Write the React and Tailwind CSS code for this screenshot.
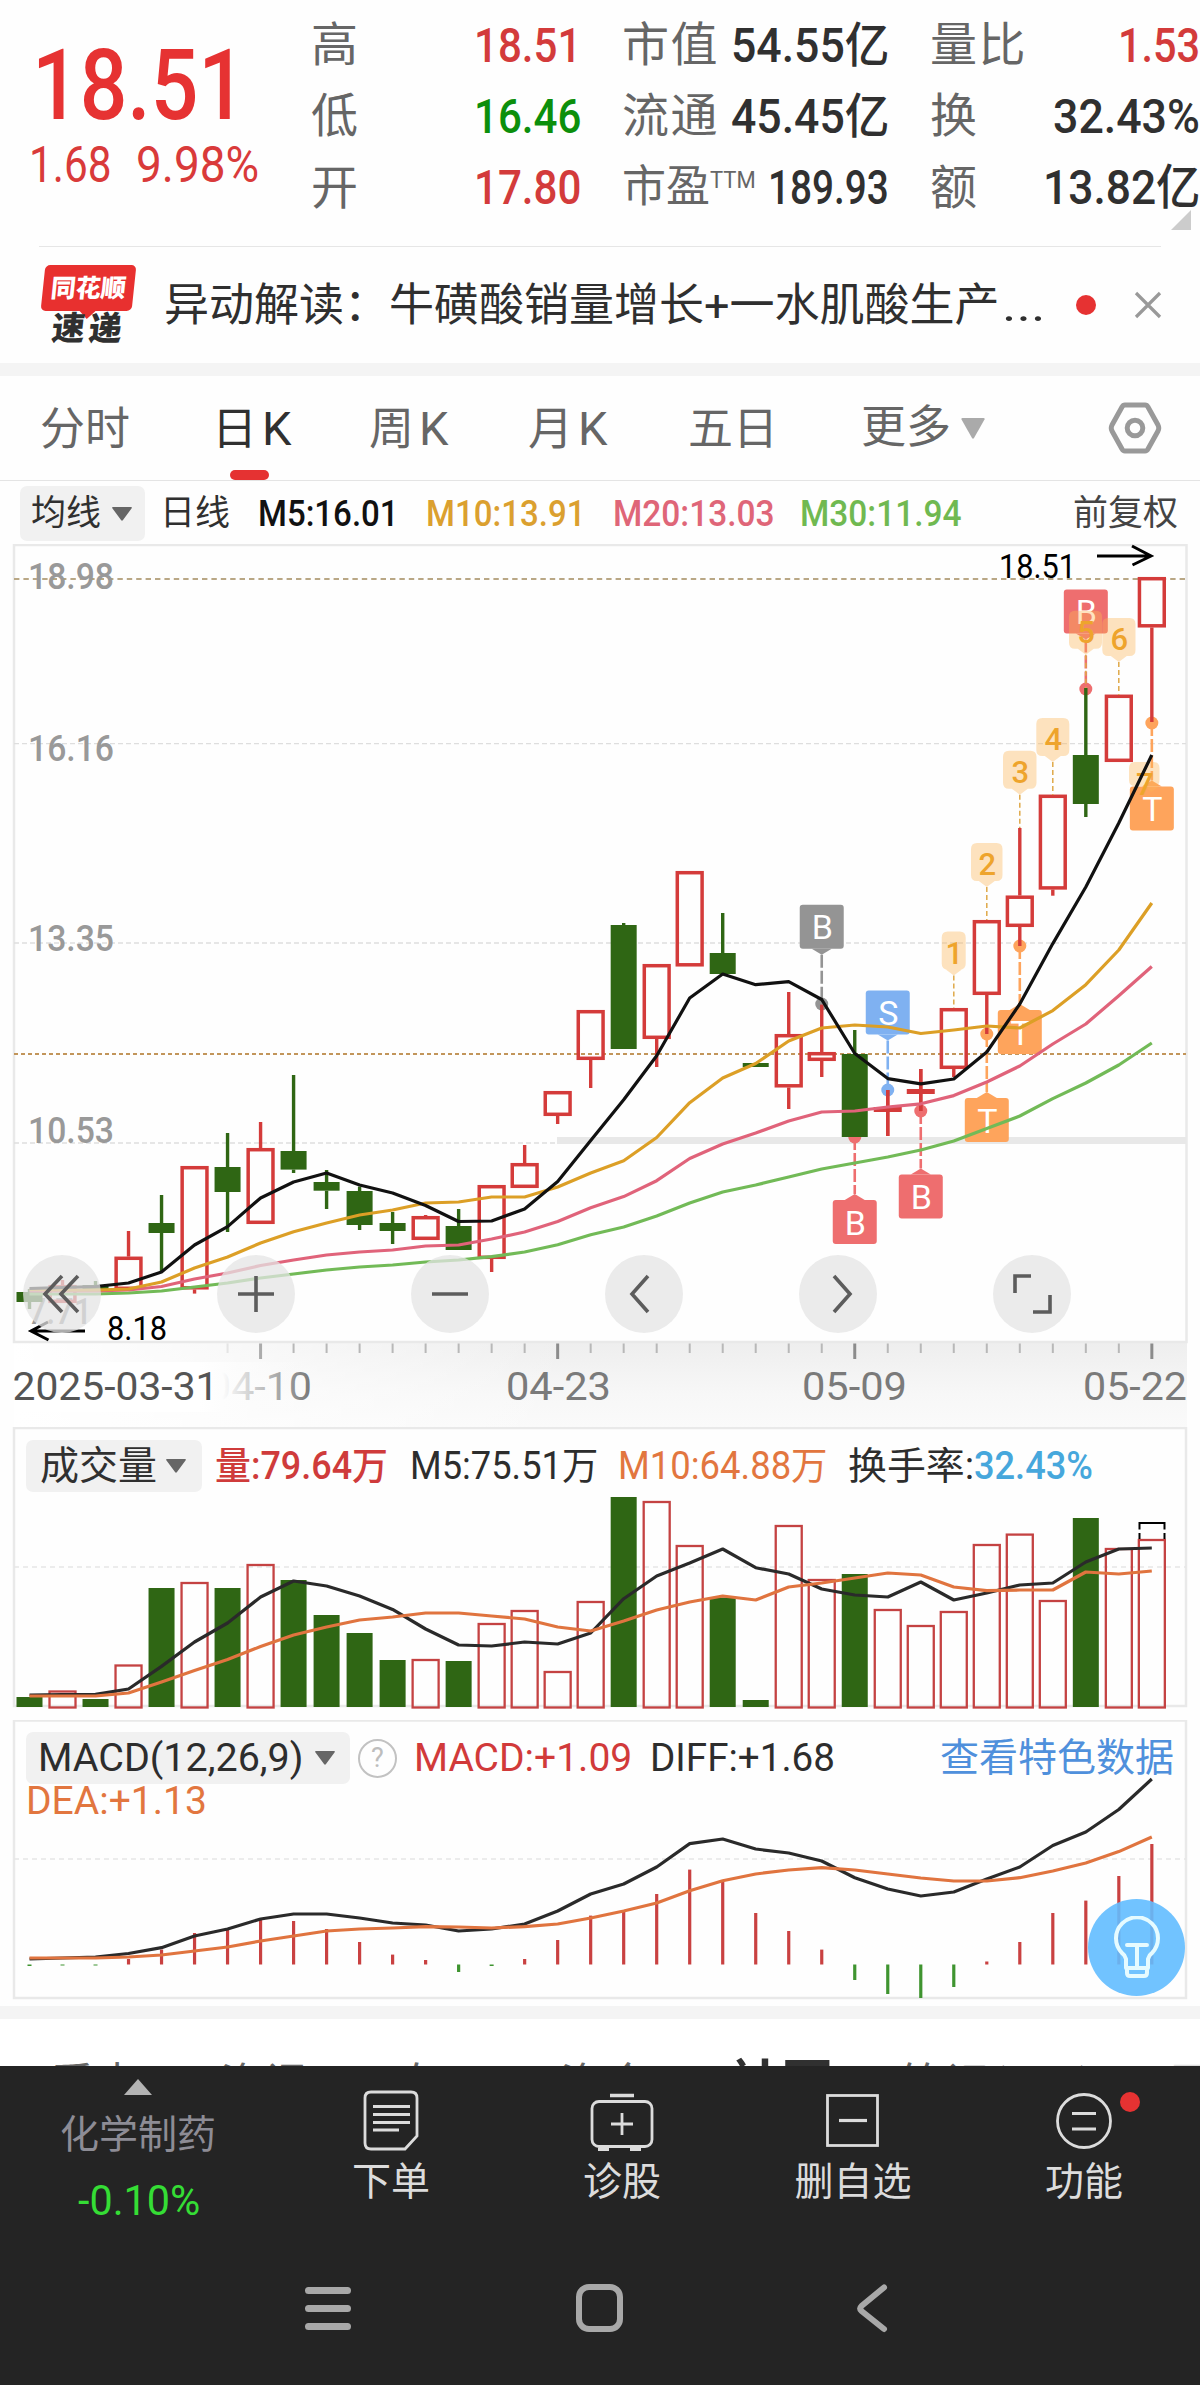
import React, { useLayoutEffect, useRef, useState } from "react";

const FONT = "font-[Roboto,'Noto_Sans_CJK_SC',sans-serif]";

// Keeps a piece of text at a fixed width by condensing it horizontally.
function Fit({ w, className = "", children }) {
  const ref = useRef(null);
  const [scale, setScale] = useState(1);
  useLayoutEffect(() => {
    const measure = () => ref.current && setScale(w / ref.current.offsetWidth);
    measure();
    document.fonts?.ready.then(measure);
  }, [w]);
  return (
    <span className={`inline-block shrink-0 whitespace-nowrap ${className}`} style={{ width: w }}>
      <span ref={ref} className="inline-block origin-left" style={{ transform: `scaleX(${scale})` }}>
        {children}
      </span>
    </span>
  );
}

const X = (i) => 29.5 + 33.01 * i;

// [kind, high, bodyTop, bodyBottom, low]
const CANDLES = [
  ["g", 1289, 1292, 1302, 1309], ["r", 1280, 1285, 1303, 1303], ["g", 1281, 1285, 1289, 1289],
  ["r", 1231, 1256.6, 1290, 1290], ["g", 1195, 1223, 1233, 1271], ["r", 1166, 1166, 1289.5, 1293.6],
  ["g", 1133, 1167, 1192, 1232], ["r", 1122, 1148, 1224, 1224], ["g", 1075, 1151, 1169.6, 1173],
  ["g", 1170, 1182, 1190.7, 1209], ["g", 1186.6, 1191, 1225, 1230], ["g", 1212, 1223, 1231, 1244],
  ["r", 1215, 1216, 1240, 1240], ["g", 1209, 1226, 1250, 1250], ["r", 1185, 1185, 1259, 1272],
  ["r", 1145, 1163, 1188, 1188], ["r", 1091, 1091, 1116, 1124], ["r", 1010, 1010, 1060, 1088],
  ["g", 923, 925, 1049, 1049], ["r", 964, 964, 1039, 1067], ["r", 871, 871, 966.5, 966.5],
  ["g", 913, 953, 974, 974], ["g", 1063, 1063, 1067, 1067], ["r", 992, 1034, 1087.5, 1109],
  ["r", 1004.6, 1052, 1061, 1077], ["g", 1030, 1054, 1137, 1137], ["r", 1090, 1107, 1112, 1136],
  ["r", 1069, 1089, 1094, 1111], ["r", 1008, 1008, 1069, 1077], ["r", 920, 920, 995, 1034],
  ["r", 828, 895.5, 927, 946], ["r", 794.6, 794.6, 889.6, 895.7], ["g", 688, 755, 804, 817],
  ["r", 694.6, 694.6, 762, 762], ["r", 577, 577, 627.5, 722],
];
const MA5 = [1288.5, 1287.5, 1286.5, 1283, 1272, 1245, 1226.6, 1198, 1182, 1173, 1185, 1193, 1205.5, 1221.5, 1221, 1209, 1181.5, 1140.4, 1099.7, 1055.7, 998, 974, 984.7, 981.7, 999.5, 1053.5, 1078.6, 1083.8, 1079, 1052, 1004, 943.6, 887, 823, 755];
const MA10 = [1289.5, 1290, 1290, 1289, 1282, 1268, 1257, 1243, 1231.8, 1223, 1215, 1210, 1203, 1202, 1197, 1197, 1187, 1173, 1160.8, 1137.5, 1102.7, 1078, 1063.5, 1041, 1028, 1025, 1027, 1033.5, 1030, 1026, 1028, 1010.6, 984.7, 950, 903];
const MA20 = [1291, 1291, 1291, 1290, 1286.5, 1279, 1273, 1265.5, 1260, 1255, 1252, 1250, 1246, 1245, 1239, 1232, 1221.5, 1207.7, 1196.6, 1180.7, 1158.5, 1144, 1133, 1121, 1112, 1111, 1107, 1103.8, 1095.6, 1082, 1066, 1044, 1024, 995.7, 966.5];
const MA30 = [1294, 1294, 1294, 1293, 1291, 1287, 1283, 1278, 1274, 1270, 1267, 1265, 1262, 1260, 1256.6, 1252, 1244.7, 1234.7, 1227, 1216, 1203, 1192, 1185, 1177, 1169, 1163, 1157, 1150, 1141, 1128.6, 1116, 1098.6, 1083, 1065, 1043];

const VOL = [1697, 1690.5, 1699, 1664.5, 1588, 1582, 1588, 1564, 1580, 1615, 1633, 1660, 1659, 1661, 1623, 1610, 1671, 1601, 1497, 1501, 1545, 1597.5, 1700, 1525, 1579, 1574, 1609, 1625, 1611, 1544, 1533.6, 1600, 1518, 1548, 1539];
const VMA5 = [1695, 1694.5, 1694.4, 1689, 1666.4, 1642, 1623, 1597, 1581, 1586, 1596, 1609.4, 1629, 1645, 1646, 1642, 1644, 1633, 1598.7, 1576, 1563, 1549, 1567.7, 1574, 1589, 1595, 1597, 1582, 1600, 1593, 1585, 1583, 1562, 1549, 1548];
const VMA10 = [1696, 1696, 1696, 1693, 1682, 1670.6, 1659.5, 1646.5, 1635, 1627, 1620, 1617, 1613, 1613, 1616, 1619, 1627, 1631, 1621, 1610, 1602, 1596, 1600, 1587, 1583, 1578, 1573, 1575, 1587, 1590.6, 1590, 1590, 1572, 1574, 1571];

const MACD = [1966, 1965.5, 1965.5, 1959, 1949.6, 1933, 1929, 1920, 1921, 1929, 1942, 1954.6, 1960, 1972, 1966, 1959, 1940, 1915.6, 1912, 1894, 1869.6, 1882, 1913, 1931, 1949.6, 1980, 1994, 1998, 1987, 1961.5, 1942, 1913, 1900.6, 1876, 1844];
const DIFF = [1959, 1958, 1957, 1953.5, 1947.7, 1936, 1929, 1919, 1914, 1914, 1918, 1923, 1925, 1931, 1929, 1924, 1911, 1894, 1884, 1867, 1843.6, 1839, 1849, 1853, 1861, 1877.7, 1889, 1896, 1892, 1879, 1867, 1845.5, 1832, 1809.5, 1779];
const DEA = [1958, 1958, 1958, 1957, 1955, 1951, 1947, 1941, 1936, 1931, 1929, 1928, 1926.6, 1927, 1928, 1926.6, 1924, 1918, 1911, 1903, 1890.7, 1880.7, 1874, 1870, 1867.7, 1870, 1874, 1878, 1881, 1881, 1877.7, 1871, 1863, 1851.6, 1837];

const GREEN = "#2f6614";
const RED = "#d43b3a";

function Line({ data, color, w = 3.2 }) {
  return (
    <polyline
      points={data.map((y, i) => `${X(i).toFixed(1)},${y}`).join(" ")}
      fill="none" stroke={color} strokeWidth={w} strokeLinejoin="round"
    />
  );
}

function Candle({ i, c }) {
  const [kind, hi, top, bot, lo] = c;
  const x = X(i);
  const color = kind === "g" ? GREEN : RED;
  return (
    <g>
      {hi < top && <line x1={x} x2={x} y1={hi} y2={top} stroke={color} strokeWidth="3.4" />}
      {lo > bot && <line x1={x} x2={x} y1={bot} y2={lo} stroke={color} strokeWidth="3.4" />}
      {kind === "g" ? (
        <rect x={x - 13} y={top} width="26" height={bot - top} fill={color} />
      ) : bot - top < 6 ? (
        <g>
          <rect x={x - 14} y={top} width="28" height={bot - top} fill={color} />
          <line x1={x} x2={x} y1={hi} y2={lo} stroke={color} strokeWidth="3.4" />
        </g>
      ) : (
        <rect x={x - 12.4} y={top + 1.7} width="24.8" height={bot - top - 3.4} fill="none" stroke={color} strokeWidth="3.5" />
      )}
    </g>
  );
}

// A lettered trade marker; `up` puts the pointer on the upper edge.
function Marker({ i, top, dot, letter, color, up }) {
  const x = X(i);
  const b = top + 44;
  return (
    <g>
      <line x1={x} x2={x} y1={up ? dot : b + 6} y2={up ? top - 6 : dot} stroke={color} strokeWidth="2.6" strokeDasharray="13 3" />
      <circle cx={x} cy={dot} r="6.5" fill={color} />
      <path d={up ? `M${x - 10} ${top}L${x} ${top - 6}L${x + 10} ${top}Z` : `M${x - 10} ${b}L${x} ${b + 6}L${x + 10} ${b}Z`} fill={color} />
      <rect x={x - 22} y={top} width="44" height="44" rx="3" fill={color} />
      <text x={x + 0.5} y={top + 34.5} fontSize="34" textAnchor="middle" fill="#fff">{letter}</text>
    </g>
  );
}

function CountTag({ n, x, x0, x1, top, h = 38, to, dy = 32 }) {
  return (
    <g>
      <g fill="#fdb658" fillOpacity="0.38">
        <path d={`M${x0 + 6} ${top}H${x1 - 6}Q${x1} ${top} ${x1} ${top + 6}V${top + h - 6}Q${x1} ${top + h} ${x1 - 6} ${top + h}H${x + 8}L${x} ${top + h + 6}L${x - 8} ${top + h}H${x0 + 6}Q${x0} ${top + h} ${x0} ${top + h - 6}V${top + 6}Q${x0} ${top} ${x0 + 6} ${top}Z`} />
      </g>
      {to && <line x1={x} x2={x} y1={top + h + 6} y2={to} stroke="#dfa94a" strokeWidth="1.5" strokeDasharray="5 3" />}
      <text x={(x0 + x1) / 2 + 0.5} y={top + dy} fontSize="31" fontWeight="500" textAnchor="middle" fill="#eea42c">{n}</text>
    </g>
  );
}

function AxisText({ x, y, w, size = 37, fill = "#999", weight = 500, children }) {
  return (
    <text x={x} y={y} fontSize={size} fontWeight={weight} fill={fill} textLength={w} lengthAdjust="spacingAndGlyphs">{children}</text>
  );
}

function KChart() {
  const ticks = [];
  for (let i = 6; i < 35; i++) ticks.push(i);
  return (
    <svg className="block" width="1200" height="883" viewBox="0 544 1200 883">
      <defs>
        <linearGradient id="axis" x1="0" y1="0" x2="0" y2="1">
          <stop offset="0" stopColor="#eeeeee" /><stop offset="0.6" stopColor="#f7f7f7" /><stop offset="1" stopColor="#fafafa" />
        </linearGradient>
        <linearGradient id="fade" x1="0" y1="0" x2="1" y2="0">
          <stop offset="0" stopColor="#fff" /><stop offset="1" stopColor="#fff" stopOpacity="0" />
        </linearGradient>
        <linearGradient id="cover" gradientUnits="userSpaceOnUse" x1="200" x2="310" y1="0" y2="0">
          <stop offset="0" stopColor="#fff" /><stop offset="0.2" stopColor="#fdfdfd" /><stop offset="1" stopColor="#fafafa" stopOpacity="0" />
        </linearGradient>
      </defs>
      <rect x="14" y="1343" width="1173" height="84" fill="url(#axis)" />
      <rect x="14" y="1343" width="560" height="84" fill="url(#fade)" />
      <rect x="14" y="545" width="1172.5" height="797" fill="none" stroke="#e9e9e9" strokeWidth="2.5" />
      {[743.6, 943, 1143].map((y) => (
        <line key={y} x1="14" x2="1186" y1={y} y2={y} stroke="#dedede" strokeWidth="1.3" strokeDasharray="5 3" />
      ))}
      <line x1="14" x2="1186" y1="579" y2="579" stroke="#b9a785" strokeWidth="2" strokeDasharray="5.4 4" />
      <rect x="557" y="1137" width="629" height="7" fill="#e8e8e8" />
      <line x1="14" x2="1186" y1="1054" y2="1054" stroke="#c2955a" strokeWidth="2" strokeDasharray="4 3" />
      <AxisText x={28} y={589} w={86}>18.98</AxisText>
      <AxisText x={28} y={761} w={86}>16.16</AxisText>
      <AxisText x={28} y={951} w={86}>13.35</AxisText>
      <AxisText x={28} y={1143} w={86}>10.53</AxisText>
      <AxisText x={28} y={1323.5} w={64}>7.71</AxisText>
      {ticks.map((i) => {
        const big = i % 9 === 7;
        return <line key={i} x1={X(i)} x2={X(i)} y1="1343.5" y2={big ? 1359 : 1353} stroke={big ? "#8c8c8c" : "#b8b8b8"} strokeWidth={big ? 3 : 2} opacity={i === 6 ? 0.3 : i === 7 ? 0.7 : 1} />;
      })}
      <AxisText x={208} y={1400} w={104} size={38} weight={400} fill="#7a7a7a">04-10</AxisText>
      <AxisText x={506} y={1400} w={105} size={38} weight={400} fill="#7a7a7a">04-23</AxisText>
      <AxisText x={802} y={1400} w={105} size={38} weight={400} fill="#7a7a7a">05-09</AxisText>
      <AxisText x={1083} y={1400} w={104} size={38} weight={400} fill="#7a7a7a">05-22</AxisText>
      <rect x="14" y="1362" width="296" height="50" fill="url(#cover)" />
      <AxisText x={12.5} y={1400} w={206} size={38} weight={400} fill="#555">2025-03-31</AxisText>

      <Marker i={24} top={904.7} dot={1004} letter="B" color="#949494" />
      <Marker i={26} top={990.6} dot={1090} letter="S" color="#7fb1f1" />
      <Marker i={25} top={1200} dot={1137} letter="B" color="#ee6e6f" up />
      <Marker i={27} top={1174.5} dot={1111} letter="B" color="#ee6e6f" up />
      <Marker i={29} top={1098} dot={1034} letter="T" color="#fea45c" up />
      <Marker i={30} top={1010} dot={946} letter="T" color="#fea45c" up />
      <Marker i={32} top={589.6} dot={689} letter="B" color="#ee6e6f" />
      <Marker i={34} top={786.4} dot={723} letter="T" color="#fea45c" up />
      <CountTag n="7" x={1151.5} x0={1129} x1={1159.5} top={762} h={24} dy={33} />
      {CANDLES.map((c, i) => <Candle key={i} i={i} c={c} />)}
      <CountTag n="1" x={953.8} x0={941.7} x1={965.7} top={931.5} to={1008} />
      <CountTag n="2" x={986.8} x0={971} x1={1002.5} top={843} to={920} />
      <CountTag n="3" x={1019.8} x0={1003} x1={1036.5} top={750.7} to={828} />
      <CountTag n="4" x={1052.8} x0={1036.3} x1={1069.3} top={718} to={795} />
      <CountTag n="5" x={1085.8} x0={1069} x1={1102} top={610.7} to={688} />
      <CountTag n="6" x={1118.8} x0={1102.3} x1={1135.5} top={618} to={695} />
      <Line data={MA30} color="#72ba57" />
      <Line data={MA20} color="#e0637a" />
      <Line data={MA10} color="#dc9f26" />
      <Line data={MA5} color="#111" />
      <AxisText x={999} y={578} w={77} size={34} weight={400} fill="#000">18.51</AxisText>
      <path d="M1097 556H1151M1132 546L1151 556L1132.5 565" fill="none" stroke="#000" strokeWidth="3" />
      <AxisText x={107} y={1340} w={60} size={34} weight={400} fill="#000">8.18</AxisText>
      <path d="M85 1331H31M48 1322L31 1331L48.5 1340" fill="none" stroke="#000" strokeWidth="3" />
    </svg>
  );
}

function RoundButton({ children }) {
  return (
    <button className="flex size-[78px] items-center justify-center rounded-full bg-[#e4e4e4]/75">
      <svg width="44" height="44" viewBox="0 0 44 44" fill="none" stroke="#5c5c5c" strokeWidth="3.6">{children}</svg>
    </button>
  );
}

function Caret({ className = "" }) {
  return <svg className={className} width="20" height="14" viewBox="0 0 20 14"><path d="M1 0H19Q20.5 0 19.5 1.5L11 13Q10 14.5 9 13L0.5 1.5Q-.5 0 1 0Z" fill="#666" /></svg>;
}

function Stat({ label, w, value, color = "text-[#303030]" }) {
  return (
    <div className="flex h-[71.3px] items-center justify-between">
      <span className="-mt-[2px] text-[47px] tracking-[1.5px] text-[#666]">{label}</span>
      <Fit w={w} className={`text-[48px] font-medium ${color}`}>{value}</Fit>
    </div>
  );
}

function Header() {
  return (
    <header className="relative flex h-[247px] pt-[10px] leading-none">
      <div className="w-[311px] shrink-0 text-[#d93a3a]">
        <Fit w={214} className="mt-[27px] ml-[32px] text-[98px] font-medium text-[#e63232]">18.51</Fit>
        <div className="mt-[5px] flex pl-[29px] text-[50px]">
          <Fit w={83}>1.68</Fit>
          <Fit w={123} className="ml-[24px]">9.98%</Fit>
        </div>
      </div>
      <div className="w-[311px] shrink-0 pr-[41px]">
        <Stat label="高" w={107} value="18.51" color="text-[#d33b3b]" />
        <Stat label="低" w={107} value="16.46" color="text-[#0c8f0c]" />
        <Stat label="开" w={107} value="17.80" color="text-[#d33b3b]" />
      </div>
      <div className="w-[308px] shrink-0 pr-[41px]">
        <Stat label="市值" w={158} value="54.55亿" />
        <Stat label="流通" w={158} value="45.45亿" />
        <Stat
          label={<span className="flex text-[44px] tracking-normal">市盈<Fit w={46} className="mt-[4px] text-[23px]">TTM</Fit></span>}
          w={121}
          value="189.93"
        />
      </div>
      <div className="w-[270px] shrink-0">
        <Stat label="量比" w={82} value="1.53" color="text-[#d33b3b]" />
        <Stat label="换" w={147} value="32.43%" />
        <Stat label="额" w={157} value="13.82亿" />
      </div>
      <svg className="absolute top-[210px] left-[1171px]" width="20" height="20"><path d="M20 0V20H0Z" fill="#cccccc" /></svg>
      <div className="absolute bottom-0 left-[39px] h-px w-[1122px] bg-[#e6e6e6]" />
    </header>
  );
}

function Notice() {
  return (
    <section className="flex h-[116px] items-center pl-[39px]">
      <div className="-mt-[1px] flex w-[98px] flex-col items-center leading-none">
        <div className="relative flex h-[46px] w-[91px] -skew-x-6 items-center justify-center rounded-[5px] bg-[#e8302f]">
          <span className="text-[25px] font-black text-white">同花顺</span>
          <svg className="absolute -bottom-[8px] left-[38px]" width="18" height="9"><path d="M0 0H18L9 9Z" fill="#e8302f" /></svg>
        </div>
        <span className="mt-[1px] ml-[2px] -skew-x-6 text-[33px] font-black tracking-[4px] text-[#303030]">速递</span>
      </div>
      <span className="ml-[27px] text-[45px] leading-none whitespace-nowrap text-[#2f2f2f]">
        异动解读：牛磺酸销量增长+一水肌酸生产
      </span>
      <Fit w={44} className="ml-[2px] text-[45px] leading-none text-[#2f2f2f]">...</Fit>
      <span className="ml-auto size-[20px] rounded-full bg-[#e63232]" />
      <svg className="mr-[38px] ml-[38px]" width="28" height="28" viewBox="0 0 28 28"><path d="M2 2L26 26M26 2L2 26" stroke="#999" strokeWidth="3.2" /></svg>
    </section>
  );
}

function Tabs() {
  return (
    <nav className="flex h-[105px] border-b border-[#e4e4e4] text-[45px] leading-[108px] text-[#666]">
      <span className="w-[212px] shrink-0 pl-[40px]">分时</span>
      <div className="relative w-[157px] shrink-0 text-[#303030]">
        日<span className="ml-[5px] text-[47px] leading-none">K</span>
        <span className="absolute bottom-0 left-[18px] h-[10px] w-[39px] rounded-full bg-[#e53232]" />
      </div>
      <span className="w-[159px] shrink-0">周<span className="ml-[5px] text-[47px] leading-none">K</span></span>
      <span className="w-[160px] shrink-0">月<span className="ml-[5px] text-[47px] leading-none">K</span></span>
      <span className="w-[173px] shrink-0">五日</span>
      <div className="flex items-center">
        更多<svg className="ml-[10px]" width="24" height="21"><path d="M1.5 0H22.500Q24 0 23.500 1.500L13 20Q12 21.500 11 20L.5 1.500Q0 0 1.500 0Z" fill="#aaa" /></svg>
      </div>
      <svg className="mt-[26px] mr-[38px] ml-auto" width="54" height="52" viewBox="0 0 54 52" fill="none" stroke="#999" strokeWidth="5" strokeLinejoin="round">
        <path d="M17 3H37Q39 3 40 5L50 23Q51.500 26 50 29L40 47Q39 49 37 49H17Q15 49 14 47L4 29Q2.500 26 4 23L14 5Q15 3 17 3Z" />
        <circle cx="27" cy="26" r="7.800" />
      </svg>
    </nav>
  );
}

function Indicators() {
  return (
    <div className="flex h-[63px] items-center pt-[2px] pr-[22px] pl-[20px] text-[35px] leading-none">
      <button className="flex h-[55px] w-[125px] shrink-0 items-center rounded-[7px] bg-[#f1f1f1] pl-[11px] text-[#303030]">
        均线<Caret className="ml-[11px]" />
      </button>
      <span className="ml-[15px] w-[98px] shrink-0 text-[#303030]">日线</span>
      <Fit w={141} className="text-[37px] font-medium text-[#111]">M5:16.01</Fit>
      <Fit w={160} className="ml-[27px] text-[37px] font-medium text-[#dba02f]">M10:13.91</Fit>
      <Fit w={162} className="ml-[27px] text-[37px] font-medium text-[#df6678]">M20:13.03</Fit>
      <Fit w={162} className="ml-[25px] text-[37px] font-medium text-[#70b951]">M30:11.94</Fit>
      <span className="ml-auto text-[#444]">前复权</span>
    </div>
  );
}

function Volume() {
  const green = new Set([0, 2, 4, 6, 8, 9, 10, 11, 13, 18, 21, 22, 25, 32]);
  return (
    <section className="relative h-[293px] leading-none">
      <svg className="absolute inset-0" width="1200" height="293" viewBox="0 1427 1200 293">
        <rect x="14" y="1428" width="1172" height="278" fill="none" stroke="#e9e9e9" strokeWidth="2.5" />
        <line x1="14" x2="1186" y1="1567" y2="1567" stroke="#e6e6e6" strokeWidth="1.5" strokeDasharray="5 4" />
        {VOL.map((y, i) => green.has(i) ? (
          <rect key={i} x={X(i) - 13} y={y} width="26" height={1707 - y} fill={GREEN} />
        ) : (
          <rect key={i} x={X(i) - 13} y={y + 1} width="26" height={1706.500 - y} fill="none" stroke="#c44242" strokeWidth="2.3" />
        ))}
        <path d="M1139.500 1539V1523H1164.500V1539" fill="none" stroke="#000" strokeWidth="2" strokeDasharray="6 3.500 38 3.500" />
        <Line data={VMA5} color="#2a2a2a" />
        <Line data={VMA10} color="#e0743f" />
      </svg>
      <div className="relative flex items-center pt-[13px] pl-[26px] text-[38px]">
        <button className="flex h-[52px] w-[176px] shrink-0 items-center rounded-[7px] bg-[#f1f1f1] pl-[14px] text-[#303030]">
          <span className="text-[39px]">成交量</span><Caret className="ml-[9px]" />
        </button>
        <Fit w={173} className="ml-[13px] font-medium text-[#cf3b3b]">量:79.64万</Fit>
        <Fit w={188} className="ml-[22px] text-[#2d2d2d]">M5:75.51万</Fit>
        <Fit w={210} className="ml-[20px] text-[#e2763f]">M10:64.88万</Fit>
        <Fit w={126} className="ml-[20px] text-[#2d2d2d]">换手率:</Fit>
        <Fit w={119} className="font-medium text-[#46a7dc]">32.43%</Fit>
      </div>
    </section>
  );
}

function Macd() {
  return (
    <section className="relative h-[286px] leading-none">
      <svg className="absolute inset-0" width="1200" height="286" viewBox="0 1720 1200 286">
        <rect x="14" y="1720.500" width="1172" height="277.500" fill="none" stroke="#e9e9e9" strokeWidth="2.5" />
        <line x1="14" x2="1186" y1="1859" y2="1859" stroke="#e6e6e6" strokeWidth="1.5" strokeDasharray="5 4" />
        {MACD.map((y, i) => (
          <line key={i} x1={X(i)} x2={X(i)} y1="1964.500" y2={y} stroke={y > 1965 ? "#3f9430" : "#c94141"} strokeWidth={y > 1965 && y < 1967 ? 4 : 3.2} />
        ))}
        <Line data={DIFF} color="#2a2a2a" />
        <Line data={DEA} color="#e0743f" />
      </svg>
      <div className="relative flex items-center pt-[12px] pr-[26px] pl-[26px] text-[39px]">
        <button className="flex h-[52px] w-[324px] shrink-0 items-center rounded-[7px] bg-[#f1f1f1] pl-[11px] text-[#2d2d2d]">
          <Fit w={265}>MACD(12,26,9)</Fit><Caret className="ml-[13px]" />
        </button>
        <span className="ml-[8px] flex size-[39px] shrink-0 items-center justify-center rounded-full border-[2.5px] border-[#c2c2c2] text-[27px] text-[#bdbdbd]">?</span>
        <Fit w={218} className="ml-[17px] text-[#d13a3a]">MACD:+1.09</Fit>
        <Fit w={185} className="ml-[18px] text-[#2d2d2d]">DIFF:+1.68</Fit>
        <span className="ml-auto text-[39px] whitespace-nowrap text-[#4f90dc]">查看特色数据</span>
      </div>
      <Fit w={181} className="relative -mt-[2px] ml-[26px] text-[39px] text-[#e2763f]">DEA:+1.13</Fit>
      <button className="absolute top-[179px] left-[1088px] flex size-[97px] items-center justify-center rounded-full bg-[#62bdff]/90">
        <svg width="48" height="64" viewBox="0 0 48 64" fill="none" stroke="#e6fbff" strokeWidth="4" strokeLinecap="round" strokeLinejoin="round">
          <path d="M13 52V43Q12 39 9 37A21 21 0 1 1 39 37Q36 39 35 43V52ZM14 52V57Q14 60 17 60H31Q34 60 34 57V52M14 29H34M24 29V51" />
        </svg>
      </button>
    </section>
  );
}

function SubTabs() {
  return (
    <div className="h-[47px] overflow-hidden bg-white">
      <div className="flex pt-[44px] text-[45px] leading-none whitespace-nowrap text-[#666]">
        <span className="ml-[50px] w-[170px] shrink-0">看点</span>
        <span className="w-[176px] shrink-0">资讯</span>
        <span className="w-[164px] shrink-0">专</span>
        <span className="w-[169px] shrink-0">资金</span>
        <span className="-mt-[3px] w-[171px] shrink-0 text-[52px] font-bold text-[#303030]">社区</span>
        <span className="w-[188px] shrink-0">笔记(<span className="ml-[74px]">)</span></span>
        <span className="w-[84px] shrink-0 pl-[82px] text-[#ddd]">同</span>
      </div>
    </div>
  );
}

function NavItem({ label, className, children }) {
  return (
    <button className={`flex shrink-0 flex-col items-center text-[39px] leading-none text-[#dcdcdc] ${className}`}>
      <svg width="64" height="64" viewBox="0 0 64 64" fill="none" stroke="#dcdcdc" strokeWidth="2.8">{children}</svg>
      <span className="mt-[11px] whitespace-nowrap">{label}</span>
    </button>
  );
}

function BottomBar() {
  return (
    <footer className="h-[319px] bg-[#242424]">
      <div className="flex h-[190px] items-start">
        <div className="flex w-[276px] shrink-0 flex-col items-center pt-[13px] leading-none">
          <svg width="28" height="16"><path d="M14 0L28 16H0Z" fill="#b3b3b3" /></svg>
          <span className="mt-[21px] text-[39px] text-[#8d8c95]">化学制药</span>
          <Fit w={122} className="mt-[24px] ml-[2px] text-[43px] text-[#35dd35]">-0.10%</Fit>
        </div>
        <NavItem label="下单" className="w-[230px] pt-[22px]">
          <path d="M12 4H52Q58 4 58 10V48L46 61H12Q6 61 6 55V10Q6 4 12 4Z" />
          <path d="M14 18.500H51M14 26.500H51M14 34.500H51M14 42H40" />
        </NavItem>
        <NavItem label="诊股" className="w-[232px] pt-[22px]">
          <path d="M20 7.500H44" strokeWidth="3.5" />
          <rect x="2" y="13.500" width="60" height="45" rx="7" />
          <path d="M32 25V47M21 36H43M8 61.500H19M40 61.500H51" />
        </NavItem>
        <NavItem label="删自选" className="w-[230px] pt-[22px]">
          <rect x="6.500" y="7.500" width="50" height="50" />
          <path d="M18 32.500H46" strokeWidth="3.2" />
        </NavItem>
        <div className="relative">
          <NavItem label="功能" className="w-[232px] pt-[22px]">
            <circle cx="32" cy="33" r="26.500" />
            <path d="M20 25.500H44M20 41H44" />
          </NavItem>
          <span className="absolute top-[26px] left-[152px] size-[20px] rounded-full bg-[#e63232]" />
        </div>
      </div>
      <div className="flex items-center pt-[26px] pl-[304px] text-[#a8a8a8]">
        <svg width="48" height="52" viewBox="0 0 48 52" stroke="currentColor" strokeWidth="7" strokeLinecap="round"><path d="M4.500 8.500H43.500M4.500 26.500H43.500M4.500 44.500H43.500" /></svg>
        <svg className="ml-[221px]" width="52" height="52" viewBox="0 0 52 52" fill="none" stroke="currentColor" strokeWidth="6"><rect x="6" y="5" width="41" height="42" rx="10" /></svg>
        <svg className="ml-[228px]" width="40" height="52" viewBox="0 0 40 52" fill="none" stroke="currentColor" strokeWidth="6" strokeLinecap="round" strokeLinejoin="round"><path d="M31 5.500L8.500 24Q6 26.500 8.500 29L31 47" /></svg>
      </div>
    </footer>
  );
}

export default function App() {
  return (
    <main className={`flex h-[2385px] w-[1200px] flex-col overflow-hidden bg-[#fefefe] ${FONT}`}>
      <Header />
      <Notice />
      <div className="h-[13px] shrink-0 bg-[#f4f4f4]" />
      <Tabs />
      <Indicators />
      <section className="relative">
        <KChart />
        <div className="absolute top-[711px] left-[23px] flex gap-[116px]">
          <RoundButton><path d="M22 4L5 22L22 40M38 4L21 22L38 40" /></RoundButton>
          <RoundButton><path d="M4 22H40M22 4V40" /></RoundButton>
          <RoundButton><path d="M4 22H40" /></RoundButton>
          <RoundButton><path d="M26 4L10 22L26 40" /></RoundButton>
          <RoundButton><path d="M18 4L34 22L18 40" /></RoundButton>
          <RoundButton><path d="M5 21V4H21M40 23V40H23" /></RoundButton>
        </div>
      </section>
      <Volume />
      <Macd />
      <div className="h-[13px] shrink-0 bg-[#f4f4f4]" />
      <SubTabs />
      <BottomBar />
    </main>
  );
}
